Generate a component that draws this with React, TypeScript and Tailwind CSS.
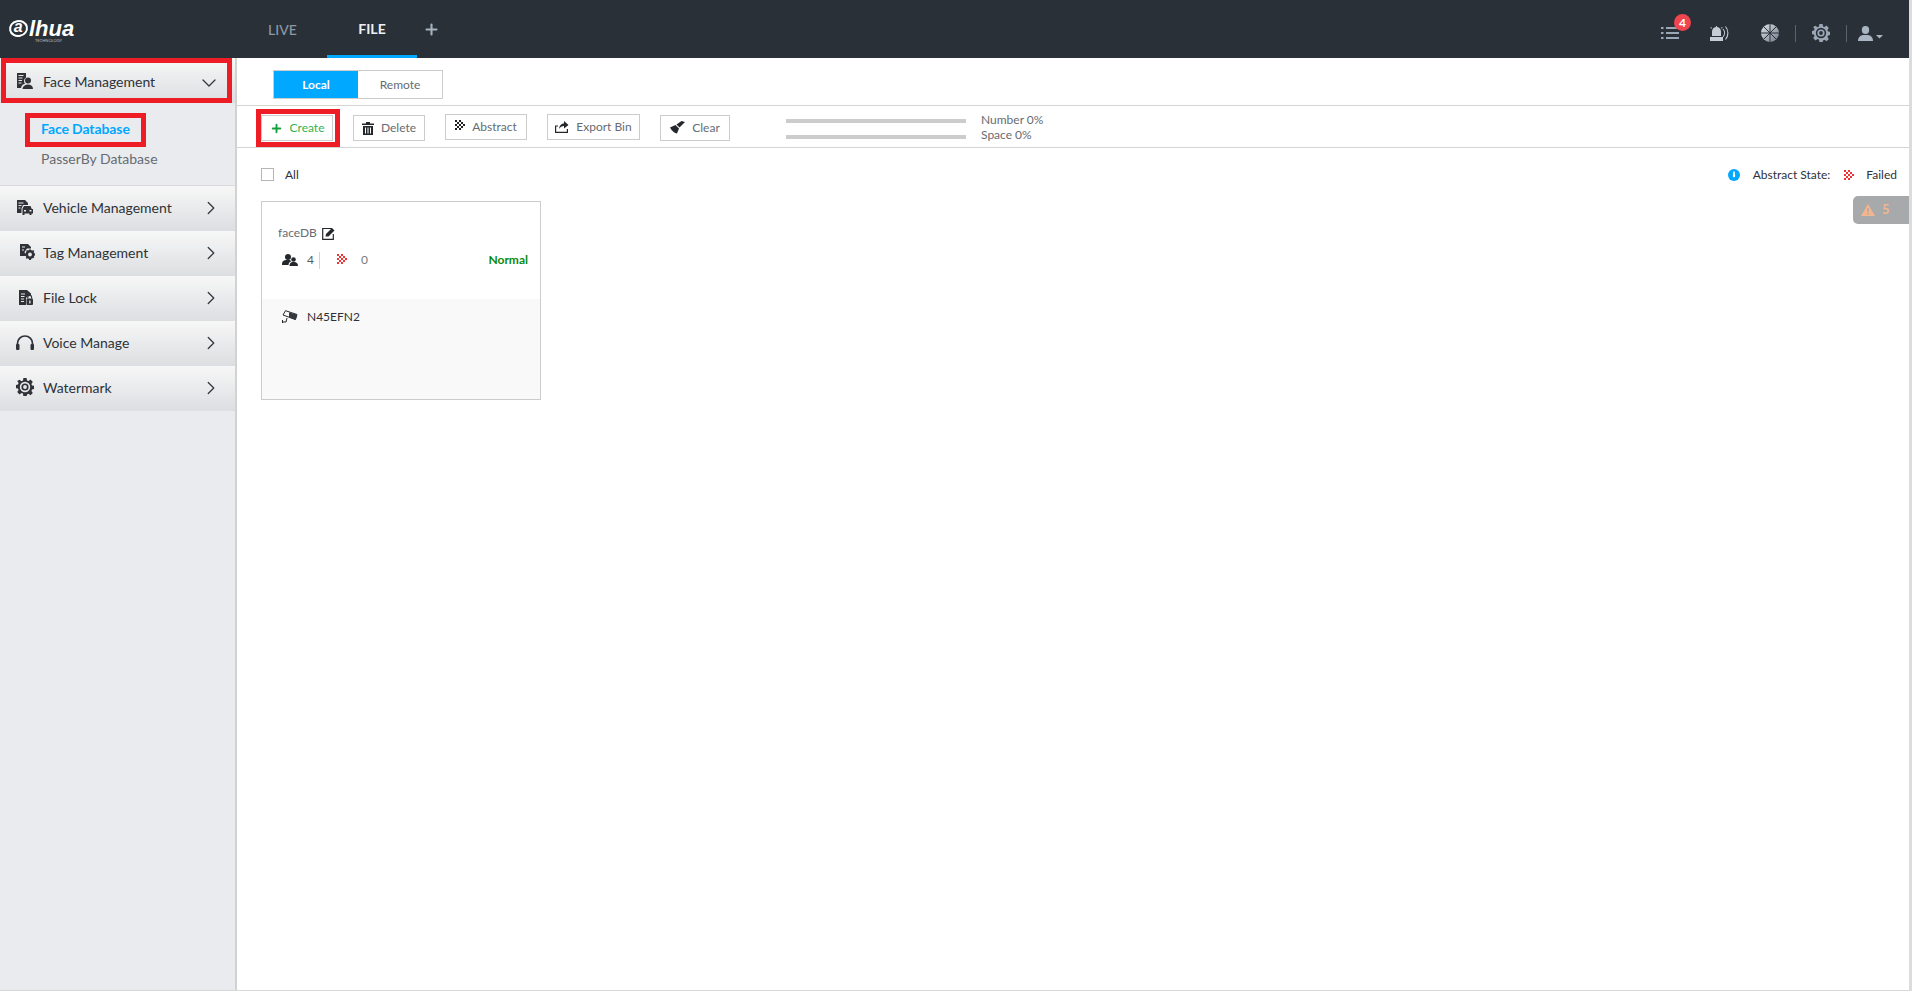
import React from "react";
import { ChevronDown, ChevronRight, Plus } from "lucide-react";

const Dots = ({ color = "#222", className = "" }: { color?: string; className?: string }) => {
  const cells = [[0,0],[4,0],[2,2],[6,2],[0,4],[4,4],[8,4],[2,6],[6,6],[0,8],[4,8]];
  return (
    <svg viewBox="0 0 10 10" shapeRendering="crispEdges" className={className}>
      {cells.map(([x, y], i) => <rect key={i} x={x} y={y} width="2" height="2" fill={color} />)}
    </svg>
  );
};

const FaceIcon = () => (
  <svg viewBox="0 0 16 16" className="w-[16px] h-[16px]" fill="#2f3338">
    <path d="M0 0h9v4.500a4 4 0 0 0-2 3.500c0 1 .4 2 1 2.700-2 .6-3.500 1.500-4 4.300H0z" />
    <path d="M1.500 2.500h5M1.500 5h4M1.500 7.500h3.500M1.500 10h3" stroke="#e6e8ea" strokeWidth="1" />
    <circle cx="11" cy="7.500" r="3" />
    <path d="M5.500 16c.3-3 2.500-4.500 5.500-4.500s5 1.500 5 4.500z" />
  </svg>
);
const VehicleIcon = () => (
  <svg viewBox="0 0 16 15" className="w-[16px] h-[15px]" fill="#2f3338">
    <path d="M0 0h8l3 3v2H6L4.500 8.500V13H0z" />
    <path d="M1.500 3h5M1.500 5.500h3M1.500 8h2" stroke="#e6e8ea" strokeWidth="1" />
    <path d="M7 6h6.500l1.300 3H16v4.500h-1.500V15h-2v-1.500h-5V15h-2v-6.500z" />
    <rect x="7" y="10" width="2" height="1.500" fill="#e6e8ea" />
    <rect x="12.500" y="10" width="2" height="1.500" fill="#e6e8ea" />
  </svg>
);
const TagIcon = () => (
  <svg viewBox="0 0 16 16" className="w-[16px] h-[16px] ml-[4px]" fill="#2f3338">
    <path d="M1 0h8l3 3v1.500H8L5.500 8l1.500 4H1z" />
    <path d="M3 3h3M3 6h2" stroke="#e6e8ea" strokeWidth="1" />
    <circle cx="11" cy="10.500" r="3.200" fill="none" stroke="#2f3338" strokeWidth="2.600" />
    <path d="M10 5.500h2v1.500h-2zM10 14h2v2h-2zM5.700 9.500h1.500v2H5.700zM14.800 9.500H16v2h-1.200zM7 7l1.300-1 1 1.200-1.300 1zM13 13l1.300-1 1 1.200-1.300 1zM14.300 6l1 1.200L14 8.300l-1-1.200zM8 12.500l1 1.200L7.800 15l-1-1.300z" />
  </svg>
);
const LockIcon = () => (
  <svg viewBox="0 0 14 15" className="w-[14px] h-[15px] ml-[1px]" fill="#2f3338">
    <path d="M0 0h8l4 3.500V6H9L7 8v7H0z" />
    <path d="M2 4h4M2 6.500h3.500M2 9h3M2 11.500h3" stroke="#e6e8ea" strokeWidth="1" />
    <rect x="7.500" y="8.500" width="6.500" height="6.500" rx="1" />
    <path d="M8.800 8.500V7.300a1.900 1.900 0 0 1 3.800 0v1.200" fill="none" stroke="#2f3338" strokeWidth="1.200" />
    <rect x="10.200" y="10.500" width="1.300" height="3" fill="#e6e8ea" />
  </svg>
);
const HeadIcon = () => (
  <svg viewBox="0 0 18 15" className="w-[18px] h-[15px]" fill="#2f3338">
    <path d="M1.500 10V8.500a7.500 7.500 0 0 1 15 0V10" fill="none" stroke="#2f3338" strokeWidth="1.700" />
    <rect x="0" y="9" width="3.500" height="6" rx="1" />
    <rect x="14.500" y="9" width="3.500" height="6" rx="1" />
  </svg>
);
const GearIcon = ({ color = "#2f3338", hole = "#e6e8ea", size = 18 }: { color?: string; hole?: string; size?: number }) => (
  <svg viewBox="0 0 18 18" style={{ width: size, height: size }} fill={color}>
    <path d="M7.400 0h3.200l.4 2.400 1.500.6 2-1.400 2.300 2.300-1.400 2 .6 1.500 2 .4v3.200l-2 .4-.6 1.500 1.400 2-2.300 2.300-2-1.400-1.500.6-.4 2.400H7.400L7 15.600l-1.500-.6-2 1.400-2.300-2.300 1.400-2-.6-1.500-2-.4V7l2-.4.600-1.500-1.400-2L3.500 1.800l2 1.400L7 2.400z" />
    <circle cx="9" cy="9" r="5.200" fill={hole} />
    <circle cx="9" cy="9" r="3.600" />
    <circle cx="9" cy="9" r="1.900" fill={hole} />
  </svg>
);

const Nav = ({ icon, label }: { icon: React.ReactNode; label: string }) => (
  <div className="h-[45px] flex items-center bg-gradient-to-b from-[#f7f7f7] to-[#dcdee1]">
    <div className="w-[43px] flex items-center justify-center pl-[7px] shrink-0 -mt-[3px]">{icon}</div>
    <span className="text-[14px] text-[#2d3238] flex-1 -mt-[3px]">{label}</span>
    <ChevronRight className="w-[22px] h-[22px] text-[#33383d] mr-[13px] -mt-[1px]" strokeWidth={1.400} />
  </div>
);

const Btn = ({ children, w, up = false, className = "" }: { children: React.ReactNode; w: string; up?: boolean; className?: string }) => (
  <div className={`h-[26px] border border-[#cccccc] bg-white flex items-center justify-center gap-[7px] text-[12px] text-[#666c72] ${w} ${up ? "-mt-[2px]" : ""} ${className}`}>
    {children}
  </div>
);

export default function App() {
  return (
    <div className="h-[991px] w-[1912px] overflow-hidden bg-[#dcdcdc] flex flex-col font-['Lato','Liberation_Sans',sans-serif] pr-[3px]">
      {/* header */}
      <header className="h-[58px] bg-[#2a3038] flex items-center shrink-0 relative">
        <div className="w-[268px] pl-[9px] shrink-0 flex flex-col text-white italic leading-none pt-[4px]">
          <div className="flex items-center h-[19px] font-['Liberation_Sans',sans-serif] font-bold text-[22px]">
            <span className="w-[19px] h-[17px] rounded-[50%] border-[2px] border-white flex items-center justify-center text-[16px] leading-none -rotate-12">
              <span className="-mt-[3px] rotate-12">a</span>
            </span>
            <span className="ml-[1px]">lhua</span>
          </div>
          <span className="text-[4px] not-italic text-[#b8bcc0] pl-[26px] mt-[1px]">TECHNOLOGY</span>
        </div>
        <span className="w-[59px] text-[14px] text-[#8b97a4] font-medium">LIVE</span>
        <div className="w-[90px] h-[58px] flex items-center justify-center border-b-[3px] border-[#00a8ff] pt-[3px] -mt-[1px]">
          <span className="text-[14px] text-[#eef0f2] font-bold">FILE</span>
        </div>
        <Plus className="w-[17px] h-[17px] text-[#a7b2bd] ml-[6px]" strokeWidth={3} />
        <div className="ml-auto flex items-center h-full mr-[25px] pt-[8px]">
          <div className="relative w-[18px] h-[14px]">
            <svg viewBox="0 0 18 14" className="w-[18px] h-[14px]" fill="#9aa7b6">
              <rect x="0" y="1" width="2.500" height="2" /><rect x="5" y="1" width="13" height="2" />
              <rect x="0" y="6" width="2.500" height="2" /><rect x="5" y="6" width="13" height="2" />
              <rect x="0" y="11" width="2.500" height="2" /><rect x="5" y="11" width="13" height="2" />
            </svg>
            <span className="absolute -top-[12px] left-[13px] w-[17px] h-[17px] rounded-full bg-[#f0444e] text-white text-[12px] font-bold flex items-center justify-center">4</span>
          </div>
          <svg viewBox="0 0 19 15" className="w-[19px] h-[15px] ml-[31px]" fill="#c4ccd5">
            <path d="M2 10V5.500a4.500 4.500 0 0 1 9 0V10z" />
            <path d="M6 0h1v1H6zM1 1l1 1-.7.700-1-1zM12 1l-1 1 .7.700 1-1z" />
            <rect x="0" y="11" width="13" height="4" />
            <path d="M13 3a6 6 0 0 1 0 8M15.500 .5a10 10 0 0 1 0 13" fill="none" stroke="#c4ccd5" strokeWidth="1.100" />
          </svg>
          <svg viewBox="0 0 18 18" className="w-[18px] h-[18px] ml-[32px]">
            <defs>
              <linearGradient id="w" x1="0" y1="0" x2="1" y2="1">
                <stop offset="0" stopColor="#dfe4e9" /><stop offset="1" stopColor="#6f7b88" />
              </linearGradient>
            </defs>
            <circle cx="9" cy="9" r="9" fill="url(#w)" />
            <path d="M9 0v18M0 9h18M2.600 2.600l12.800 12.800M15.400 2.600L2.600 15.400" stroke="#2a3038" strokeWidth="1" />
          </svg>
          <div className="w-[1px] h-[17px] bg-[#5b636c] mx-[16px]" />
          <GearIcon color="#9aa7b6" hole="#2a3038" size={18} />
          <div className="w-[1px] h-[17px] bg-[#5b636c] ml-[16px] mr-[11px]" />
          <svg viewBox="0 0 26 15" className="w-[26px] h-[15px]" fill="#a9b5c3">
            <ellipse cx="7.500" cy="4" rx="3.700" ry="4" />
            <path d="M0 15c0-4 2.500-5.500 5-6h5c2.500.5 5 2 5 6z" />
            <path d="M18 9h7l-3.500 3.500z" />
          </svg>
        </div>
      </header>

      <div className="flex-1 flex min-h-0 border-b border-[#d8d8d8] bg-white">
        {/* sidebar */}
        <aside className="w-[237px] shrink-0 bg-[#e9ebee] border-r-2 border-[#d2d2d2]">
          <div className="relative h-[45px] flex items-center bg-gradient-to-b from-[#f7f7f7] to-[#dcdee1]">
            <div className="w-[43px] flex justify-center pl-[7px] shrink-0 mt-[1px]"><FaceIcon /></div>
            <span className="text-[14px] text-[#2d3238] flex-1 mt-[1px]">Face Management</span>
            <ChevronDown className="w-[24px] h-[24px] text-[#33383d] mr-[14px] mt-[4px]" strokeWidth={1.300} />
            <div className="absolute left-[1px] top-0 w-[231px] h-[45px] border-[5px] border-[#ee1c25]" />
          </div>
          <div className="h-[83px] border-b border-[#d9dadc] flex flex-col pl-[41px] pt-[12px] text-[14px]">
            <div className="relative h-[26px] flex items-center">
              <span className="text-[#00a8ff] font-bold tracking-[-0.1px]">Face Database</span>
              <div className="absolute -left-[16px] -top-[2px] w-[121px] h-[34px] border-[5px] border-[#ee1c25]" />
            </div>
            <div className="h-[26px] mt-[4px] flex items-center text-[#666c72]">PasserBy Database</div>
          </div>
          <Nav icon={<VehicleIcon />} label="Vehicle Management" />
          <Nav icon={<TagIcon />} label="Tag Management" />
          <Nav icon={<LockIcon />} label="File Lock" />
          <Nav icon={<HeadIcon />} label="Voice Manage" />
          <Nav icon={<GearIcon />} label="Watermark" />
        </aside>

        {/* main */}
        <main className="flex-1 min-w-0 flex flex-col">
          <div className="h-[48px] border-b border-[#d4d4d4] pl-[36px] pt-[12px] shrink-0">
            <div className="flex w-[170px] h-[29px] border border-[#cccccc] text-[12px]">
              <div className="w-[84px] bg-[#00a8ff] text-white font-bold flex items-center justify-center">Local</div>
              <div className="flex-1 flex items-center justify-center text-[#666c72]">Remote</div>
            </div>
          </div>
          <div className="h-[42px] border-b border-[#d4d4d4] flex items-center pl-[24px] pt-[3px] shrink-0">
            <div className="relative mr-[20px]">
              <Btn w="w-[72px]" className="text-[#2eb552]">
                <Plus className="w-[13px] h-[13px] text-[#16a03c]" strokeWidth={3.500} />
                <span className="text-[#2eb552]">Create</span>
              </Btn>
              <div className="absolute -left-[5px] -top-[6px] w-[84px] h-[38px] border-[5px] border-[#ee1c25]" />
            </div>
            <Btn w="w-[72px]" className="mr-[20px]">
              <svg viewBox="0 0 12 13" className="w-[12px] h-[13px]" fill="#24282c">
                <path d="M4 0h4v1.500h4V3H0V1.500h4zM1 4h10v9H1zM3 5.500v6h1v-6zm2.500 0v6h1v-6zm2.500 0v6h1v-6z" fillRule="evenodd" />
              </svg>
              Delete
            </Btn>
            <Btn w="w-[82px]" up className="mr-[20px]">
              <Dots className="w-[10px] h-[10px] -mt-[4px]" />
              Abstract
            </Btn>
            <Btn w="w-[93px]" up className="mr-[20px]">
              <svg viewBox="0 0 14 14" className="w-[14px] h-[14px] -mt-[3px]" fill="none" stroke="#24282c" strokeWidth="1.200">
                <path d="M3 7H.600v6.400h11.800V10" />
                <path d="M4 10c.3-3 2-5.500 5-5.500V2l4.500 4L9 9.500V7C7 7 5 8 4 10z" fill="#24282c" stroke="none" />
              </svg>
              Export Bin
            </Btn>
            <Btn w="w-[70px]" className="mr-[56px]">
              <svg viewBox="0 0 15 13" className="w-[15px] h-[13px] -mt-[2px]" fill="#24282c">
                <path d="M0 6.500 5.500 4 9 7.500l-2 5c-2.500 0-5-2.500-7-6z" />
                <path d="M6.500 3.500 11.500 0 15 1 9.500 6.500z" />
              </svg>
              Clear
            </Btn>
            <div className="flex flex-col gap-[12px] w-[180px] mr-[15px] mt-[1px]">
              <div className="h-[4px] bg-[#cccccc]" />
              <div className="h-[4px] bg-[#cccccc]" />
            </div>
            <div className="text-[12px] leading-[15px] text-[#666c72] -mt-[3px]">
              <div>Number 0%</div>
              <div>Space 0%</div>
            </div>
          </div>

          <div className="flex-1 relative pl-[24px] pr-[12px] min-h-0">
            <div className="h-[53px] flex items-center text-[12px] text-[#2d3238]">
              <span className="w-[13px] h-[13px] border border-[#b5b5b5] bg-white mr-[11px]" />
              <span>All</span>
              <div className="ml-auto flex items-center">
                <svg viewBox="0 0 12 12" className="w-[12px] h-[12px] mr-[13px]">
                  <circle cx="6" cy="6" r="6" fill="#00a8ff" />
                  <path d="M5.300 2.500h1.400l.5 4.500a1.200 1.200 0 1 1-2.400 0z" fill="#fff" />
                </svg>
                <span>Abstract State:</span>
                <Dots color="#ee3333" className="w-[10px] h-[10px] ml-[14px] mr-[12px]" />
                <span>Failed</span>
              </div>
            </div>
            <div className="absolute right-0 top-[48px] w-[56px] h-[28px] rounded-l-[5px] bg-[#a8a9ab] flex items-center pl-[8px] gap-[7px] text-[#f2b68e] font-bold text-[13px]">
              <svg viewBox="0 0 14 12" className="w-[14px] h-[12px]">
                <path d="M7 0l7 12H0z" fill="#f2b68e" />
                <rect x="6.300" y="4" width="1.400" height="4" fill="#a8a9ab" />
                <rect x="6.300" y="9" width="1.400" height="1.500" fill="#a8a9ab" />
              </svg>
              5
            </div>

            <div className="w-[280px] h-[199px] border border-[#cccccc] flex flex-col">
              <div className="h-[97px] bg-white relative px-[16px] pt-[22px]">
                <div className="flex items-center text-[12px] text-[#666c72] h-[18px]">
                  faceDB
                  <svg viewBox="0 0 14 13" className="w-[14px] h-[13px] ml-[5px]">
                    <path d="M10 1.500H.700v10.800h10.600V7" fill="none" stroke="#24282c" strokeWidth="1.200" />
                    <path d="M3.500 9.500 4 7l6-6 2.500 2.500-6 6z" fill="#24282c" />
                  </svg>
                </div>
                <div className="flex items-center h-[18px] mt-[9px] text-[12px]">
                  <svg viewBox="0 0 16 12" className="w-[16px] h-[12px] ml-[4px]" fill="#24282c">
                    <circle cx="6" cy="3" r="3" />
                    <path d="M0 10c0-3 2-4 4-4h3c1 0 2 .5 2 1.500C7.500 8 6.500 9 6.500 11H0z" />
                    <circle cx="11.500" cy="5.500" r="2.300" />
                    <path d="M7.500 12c0-3 1.500-4 3-4h2c1.500 0 3.500 1 3.500 4z" />
                  </svg>
                  <span className="ml-[9px] text-[#555b61]">4</span>
                  <span className="w-[1px] h-[17px] bg-[#d4d4d4] ml-[5px]" />
                  <Dots color="#ee3333" className="w-[10px] h-[10px] ml-[17px] -mt-[2px]" />
                  <span className="ml-[14px] text-[#777d83]">0</span>
                  <span className="ml-auto -mr-[4px] text-[#0a8a0a] font-bold text-[12px]">Normal</span>
                </div>
              </div>
              <div className="flex-1 bg-[#f9f9f9] pl-[20px] pt-[9px]">
                <div className="flex items-center h-[18px] text-[12px] text-[#2d3238]">
                  <svg viewBox="0 0 16 14" className="w-[16px] h-[14px]">
                    <path d="M3.500.700 15 4.500l-1.500 5L1 5z" fill="none" stroke="#24282c" strokeWidth="1" />
                    <path d="M7 2.500l8 2-1.500 5.500-6.500-2.500z" fill="#33383d" />
                    <path d="M.500 10v3M.500 12H4l1-4" fill="none" stroke="#24282c" strokeWidth="1" />
                  </svg>
                  <span className="ml-[9px]">N45EFN2</span>
                </div>
              </div>
            </div>
          </div>
        </main>
      </div>
    </div>
  );
}
